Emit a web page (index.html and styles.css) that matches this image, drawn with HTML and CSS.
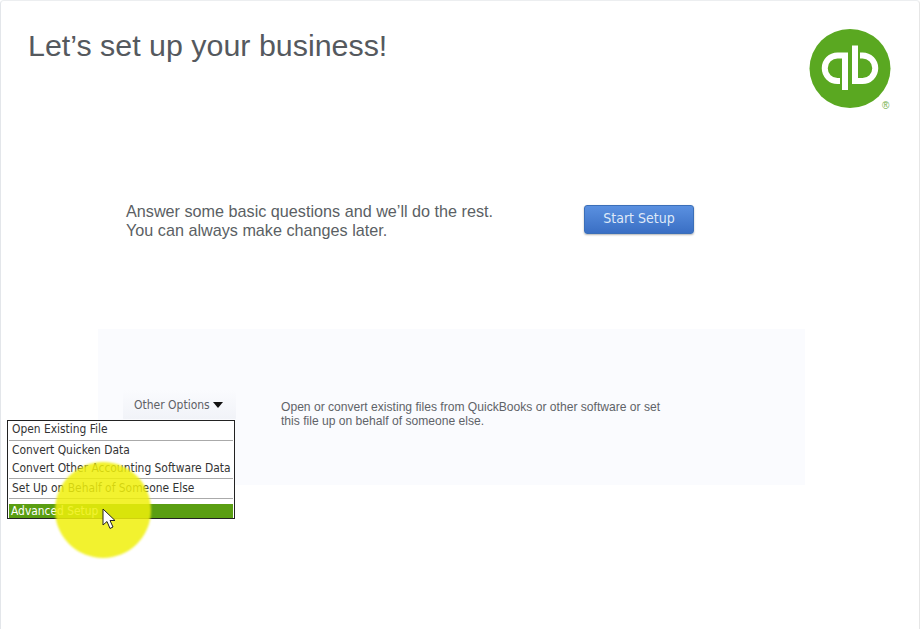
FILE: index.html
```html
<!DOCTYPE html>
<html lang="en">
<head>
<meta charset="utf-8">
<title>Let's set up your business!</title>
<link rel="stylesheet" href="styles.css">
</head>
<body>
<main class="window">
  <header class="header">
    <h1 class="title">Let’s set up your business!</h1>
    <div class="brand">
      <svg class="logo" viewBox="0 0 82 80" width="82" height="80" aria-label="QuickBooks">
        <ellipse cx="41" cy="39.500" rx="40.500" ry="39.500" fill="#5aa821"/>
        <path d="M36 26.500H28.500a12.750 12.750 0 0 0 0 25.500H31M36 23.500V61" fill="none" stroke="#fff" stroke-width="6"/>
        <path d="M46 16.500V52H53.500a12.750 12.750 0 0 0 0-25.500H51" fill="none" stroke="#fff" stroke-width="6"/>
      </svg>
      <span class="reg">®</span>
    </div>
  </header>
  <section class="intro">
    <p class="intro-text">Answer some basic questions and we’ll do the rest.<br>You can always make changes later.</p>
    <button class="start" type="button">Start Setup</button>
  </section>
  <section class="band">
    <div class="options"><span>Other Options</span><i class="caret"></i></div>
    <p class="band-text">Open or convert existing files from QuickBooks or other software or set<br>this file up on behalf of someone else.</p>
  </section>
  <ul class="menu">
    <li class="item">Open Existing File</li>
    <li class="sep"></li>
    <li class="item">Convert Quicken Data</li>
    <li class="item">Convert Other Accounting Software Data</li>
    <li class="sep"></li>
    <li class="item">Set Up on Behalf of Someone Else</li>
    <li class="sep"></li>
    <li class="item active">Advanced Setup</li>
  </ul>
  <div class="spotlight"></div>
  <svg class="cursor" viewBox="0 0 14 22" width="14" height="22"><path d="M1 1V17L5 13.500L8 20.500L11 19L8 12.500H13Z" fill="#fff" stroke="#222" stroke-width="1"/></svg>
</main>
</body>
</html>
```
FILE: styles.css
```css
* { box-sizing: border-box; }
html, body { margin: 0; padding: 0; background: #fff; }
.window {
  position: relative;
  width: 920px;
  height: 629px;
  overflow: hidden;
  background: #fff;
  border-left: 1px solid #e3e6ea;
  border-top: 1px solid #eceef0;
  border-right: 1px solid #e6e6e6;
  border-radius: 4px 4px 0 0;
  font-family: "Liberation Sans", Arial, sans-serif;
}
.header {
  display: flex;
  justify-content: space-between;
  align-items: flex-start;
  padding: 27px 28px 0 27px;
  height: 190px;
}
.title {
  margin: 0;
  font-size: 30.4px;
  line-height: 35px;
  font-weight: 400;
  color: #55595e;
}
.brand { position: relative; width: 82px; margin-top: 1px; }
.logo { display: block; }
.reg {
  position: absolute;
  left: 73px;
  top: 71px;
  font-size: 10px;
  line-height: 12px;
  color: #6fae4a;
}
.intro {
  display: flex;
  align-items: center;
  height: 60px;
  padding: 0 0 0 125px;
}
.intro-text {
  margin: 0;
  width: 458px;
  font-size: 16.2px;
  line-height: 19px;
  color: #5b5f64;
}
.start {
  width: 110px;
  height: 29px;
  margin-top: -4px;
  padding: 0 0 2px;
  border: 1px solid #3b6fb8;
  border-radius: 3px;
  background: linear-gradient(#5a90e0, #3a6fc4);
  box-shadow: 0 1px 2px rgba(0,0,0,.3);
  color: #dfe9f8;
  font-family: "DejaVu Sans Condensed", "DejaVu Sans", sans-serif;
  font-size: 14px;
}
.band {
  display: flex;
  align-items: flex-start;
  width: 707px;
  height: 156px;
  margin: 78px 0 0 97px;
  padding: 61px 0 0 25px;
  background: #fafbfe;
}
.options {
  display: flex;
  align-items: center;
  gap: 3px;
  width: 113px;
  height: 29px;
  padding-left: 11px;
  background: linear-gradient(#fafbfe, #f1f3f8);
  color: #5e6166;
  font-family: "DejaVu Sans Condensed", "DejaVu Sans", sans-serif;
  font-size: 12px;
}
.caret {
  width: 0;
  height: 0;
  border-left: 5.500px solid transparent;
  border-right: 5.500px solid transparent;
  border-top: 6px solid #111;
}
.band-text {
  margin: 10px 0 0 45px;
  font-size: 12.100px;
  line-height: 14px;
  color: #5f6368;
}
.menu {
  position: absolute;
  left: 6px;
  top: 419px;
  width: 228px;
  height: 99px;
  margin: 0;
  padding: 0 1px;
  list-style: none;
  background: #fff;
  border: 1px solid #222;
  color: #333;
  font-family: "DejaVu Sans Condensed", "DejaVu Sans", sans-serif;
  font-size: 11.900px;
}
.item { height: 18px; line-height: 18px; padding-left: 3px; white-space: nowrap; }
.item:first-child { line-height: 16px; }
.sep { height: 1px; margin-top: 1px; background: #aaa; }
.active { background: #5a9e12; color: #fff; margin-top: 5px; height: 14px; line-height: 14px; padding-left: 2px; }
.spotlight {
  position: absolute;
  left: 54px;
  top: 461px;
  width: 96px;
  height: 96px;
  border-radius: 50%;
  background: rgba(240, 240, 10, .85);
  filter: blur(1px);
}
.cursor { position: absolute; left: 101px; top: 507px; }
```
